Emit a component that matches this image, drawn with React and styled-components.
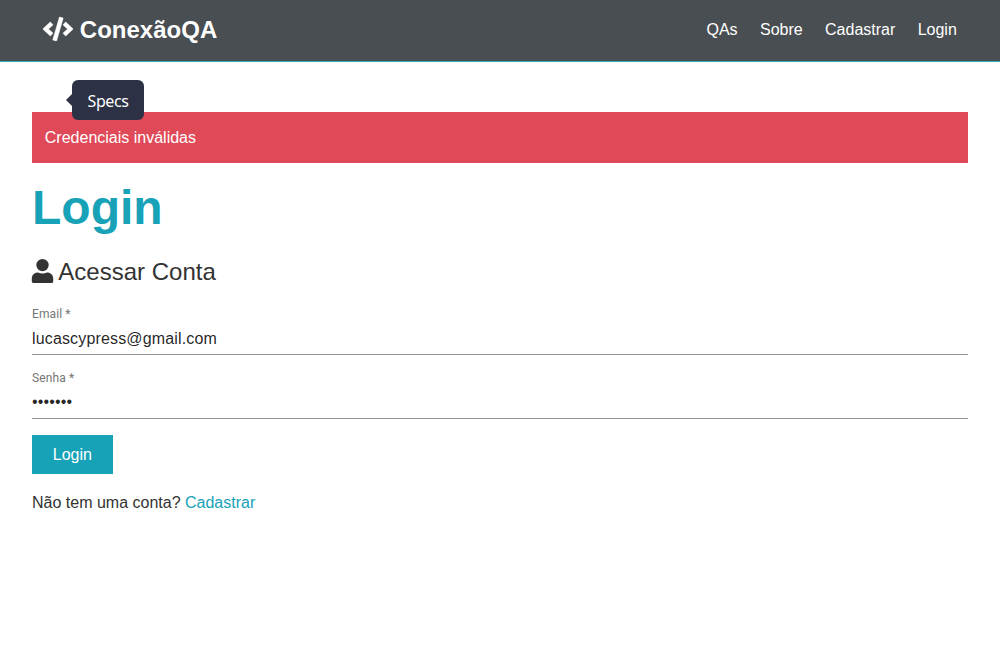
import React from 'react';
import styled, { createGlobalStyle } from 'styled-components';
import { FaCode } from 'react-icons/fa';

const GlobalStyle = createGlobalStyle`
  * { box-sizing: border-box; margin: 0; padding: 0; }
  body {
    font-family: "Liberation Sans", Arial, sans-serif;
    font-size: 16px;
    line-height: 1.6;
    background: #fff;
    color: #333;
  }
  a { text-decoration: none; color: #17a2b8; }
  ul { list-style: none; }
`;

const Navbar = styled.nav`
  display: flex;
  align-items: center;
  justify-content: space-between;
  padding: 11.2px 32px;
  background: #494e52;
  border-bottom: 1px solid #2eabbf;
`;

const NavLink = styled.a`
  color: #fff;
  padding: 7.2px;
  margin: 0 4px;
`;

const Brand = styled.h1`
  font-size: 24px;
  font-weight: 700;
`;

const NavList = styled.ul`
  display: flex;
`;

const CodeIcon = styled(FaCode)`
  width: 30px;
  height: 24px;
  vertical-align: -3px;
  overflow: visible;

  path {
    stroke: #fff;
    stroke-width: 8px;
  }
`;

const UserSvg = styled.svg`
  width: 21px;
  height: 24px;
  vertical-align: -3px;
  overflow: visible;
  fill: currentColor;
`;

const Container = styled.main`
  position: relative;
  padding: 50.2px 32px 0;
`;

const Tooltip = styled.div`
  position: absolute;
  top: 18.2px;
  left: 72px;
  width: 72px;
  height: 40px;
  border-radius: 6px;
  background: #2c3145;
  color: #fff;
  font: 16px/42px "Noto Sans", sans-serif;
  letter-spacing: -0.4px;
  text-align: center;

  &::before {
    content: '';
    position: absolute;
    left: -6px;
    top: 14px;
    border: 6px solid transparent;
    border-left: 0;
    border-right-color: #2c3145;
  }
`;

const Alert = styled.div`
  padding: 12.8px;
  margin-bottom: 16px;
  background: #e04958;
  color: #fff;
`;

const Title = styled.h1`
  font-size: 48px;
  line-height: 1.2;
  margin-bottom: 16px;
  color: #17a2b8;
`;

const Lead = styled.p`
  font-size: 24px;
  margin-bottom: 16px;
`;

const Field = styled.div`
  display: flex;
  flex-direction: column;
  height: 48px;
  margin-bottom: 16px;
  border-bottom: 1px solid #949494;
`;

const Label = styled.label`
  height: 16px;
  font: 12px/14px Roboto, sans-serif;
  letter-spacing: 0.11px;
  color: #757575;
`;

const Input = styled.input`
  height: 31px;
  padding: ${({ type }) => (type === 'password' ? '4px 0 5px' : '6px 0 5px')};
  border: 0;
  outline: 0;
  background: none;
  font: 16px "Liberation Sans", Arial, sans-serif;
  letter-spacing: 0.15px;
  color: rgba(0, 0, 0, 0.87);
`;

const Button = styled.button`
  display: block;
  padding: 6.4px 20.8px;
  border: 0;
  background: #17a2b8;
  color: #fff;
  font: 16px/25.6px "Liberation Sans", Arial, sans-serif;
`;

const Hint = styled.p`
  margin: 16px 0;
`;

function UserIcon() {
  return (
    <UserSvg viewBox="0 0 21 24" aria-hidden="true">
      <circle cx="10.5" cy="6.1" r="6.2" />
      <path d="M6 13.6C7.4 14.3 9 14.6 10.5 14.6S13.6 14.3 15 13.6C18.7 13.6 21.2 16.2 21.2 19.4V22.4Q21.2 24 19.6 24H1.4Q-.2 24-.2 22.4V19.4C-.2 16.2 2.3 13.6 6 13.6Z" />
    </UserSvg>
  );
}

export default function App() {
  return (
    <>
      <GlobalStyle />
      <Navbar>
        <Brand>
          <NavLink href="#"><CodeIcon /> ConexãoQA</NavLink>
        </Brand>
        <NavList>
          {['QAs', 'Sobre', 'Cadastrar', 'Login'].map((item) => (
            <li key={item}><NavLink href="#">{item}</NavLink></li>
          ))}
        </NavList>
      </Navbar>
      <Container>
        <Alert>Credenciais inválidas</Alert>
        <Tooltip>Specs</Tooltip>
        <Title>Login</Title>
        <Lead><UserIcon /> Acessar Conta</Lead>
        <form>
          <Field>
            <Label htmlFor="email">Email *</Label>
            <Input id="email" type="email" defaultValue="lucascypress@gmail.com" />
          </Field>
          <Field>
            <Label htmlFor="password">Senha *</Label>
            <Input id="password" type="password" defaultValue="1234567" />
          </Field>
          <Button type="button">Login</Button>
        </form>
        <Hint>Não tem uma conta? <a href="#">Cadastrar</a></Hint>
      </Container>
    </>
  );
}
